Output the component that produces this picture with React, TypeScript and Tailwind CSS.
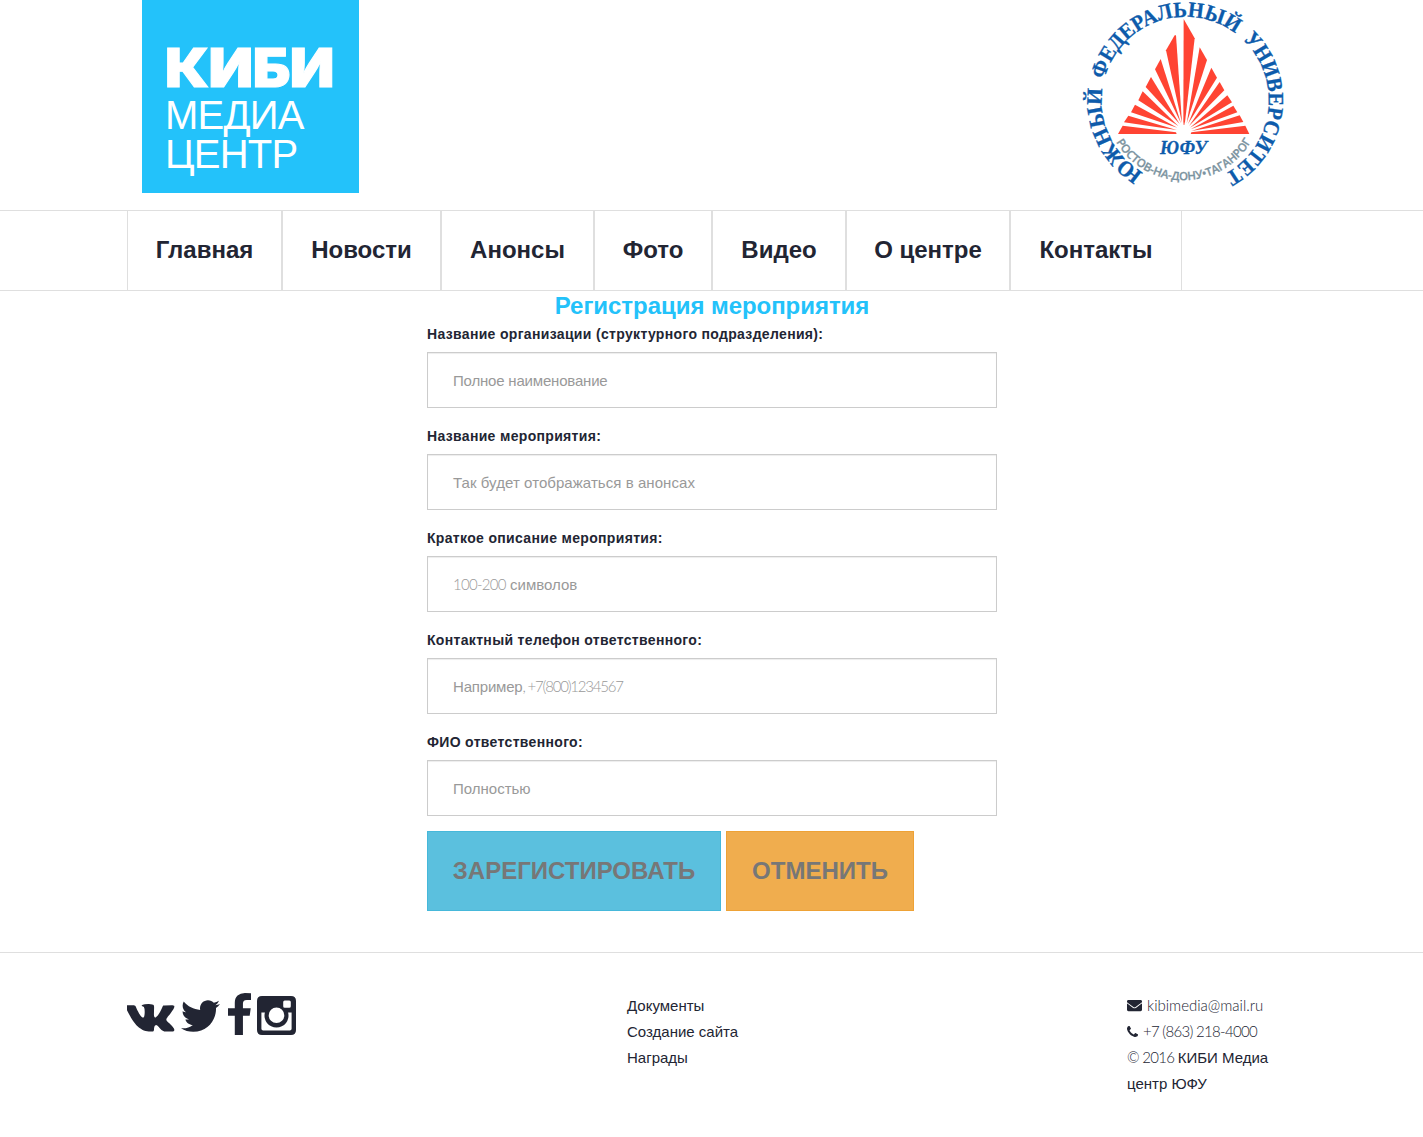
import { FaTwitter, FaEnvelope } from "react-icons/fa";

const nav = [
  { label: "Главная", box: "w-[155px]" },
  { label: "Новости", box: "w-[159px]" },
  { label: "Анонсы", box: "w-[153px]" },
  { label: "Фото", box: "w-[118px]" },
  { label: "Видео", box: "w-[134px]" },
  { label: "О центре", box: "w-[164px]" },
  { label: "Контакты", box: "w-[172px]" },
];

const fields = [
  { label: "Название организации (структурного подразделения):", lead: "", thin: "", text: "Полное наименование", track: "tracking-[-0.19px]", thinTrack: "" },
  { label: "Название мероприятия:", lead: "", thin: "", text: "Так будет отображаться в анонсах", track: "tracking-[0.06px]", thinTrack: "" },
  { label: "Краткое описание мероприятия:", lead: "", thin: "100-200", text: " символов", track: "tracking-normal", thinTrack: "tracking-[-0.7px]" },
  { label: "Контактный телефон ответственного:", lead: "Например", thin: ", +7(800)1234567", text: "", track: "tracking-[-0.19px]", thinTrack: "tracking-[-1.2px]" },
  { label: "ФИО ответственного:", lead: "", thin: "", text: "Полностью", track: "tracking-normal", thinTrack: "" },
];

const rays = [
  "341,57 374,115 344,375 340,375",
  "314,106 318,106 336,368 288,151",
  "272,177 333,370 255,208",
  "243,231 329,372 227,261",
  "218,274 325,378 205,301",
  "195,314 322,383 183,337",
  "175,347 320,390 162,367",
  "158,377 318,397 320,402 144,402",
  "389,142 411,180 350,370",
  "424,203 441,233 354,372",
  "449,246 463,271 357,378",
  "472,286 486,307 360,383",
  "490,317 502,337 362,388",
  "509,346 520,366 364,393",
  "526,377 538,402 362,402 364,397",
];

function Emblem() {
  return (
    <svg className="h-[195px] w-[224px] overflow-visible" viewBox="0 0 224 195">
      <defs>
        <path id="ring" d="M73.3 172.6 A83.5 83.5 0 1 1 153.2 174.7" />
        <path id="bowl" d="M46 142 A78.5 78.5 0 0 0 182 140" />
        <radialGradient id="glow">
          <stop offset="0.1" stopColor="#fff" />
          <stop offset="1" stopColor="#fff" stopOpacity="0" />
        </radialGradient>
      </defs>
      <g transform="scale(0.33333)" fill="#ff4433">
        {rays.map((points) => (
          <polygon key={points} points={points} />
        ))}
      </g>
      <circle cx="114" cy="129" r="7.5" fill="url(#glow)" />
      <g
        className="font-['Liberation_Serif'] text-[22px] font-bold"
        fill="#0d5bab"
        stroke="#0d5bab"
        strokeWidth="0.3"
      >
        <text>
          <textPath href="#ring" textLength="99" lengthAdjust="spacingAndGlyphs">
            ЮЖНЫЙ
          </textPath>
        </text>
        <text>
          <textPath href="#ring" startOffset="108" textLength="164" lengthAdjust="spacingAndGlyphs">
            ФЕДЕРАЛЬНЫЙ
          </textPath>
        </text>
        <text>
          <textPath href="#ring" startOffset="281" textLength="158" lengthAdjust="spacingAndGlyphs">
            УНИВЕРСИТЕТ
          </textPath>
        </text>
      </g>
      <text className="font-['Open_Sans'] text-[11.5px] font-semibold" fill="#7b93a0" stroke="#7b93a0" strokeWidth="0.25">
        <textPath href="#bowl" textLength="163" lengthAdjust="spacing">
          РОСТОВ-НА-ДОНУ•ТАГАНРОГ
        </textPath>
      </text>
      <text
        x="90"
        y="153.5"
        textLength="47"
        className="font-['Liberation_Serif'] text-[18px] font-bold italic"
        fill="#0d5bab"
        stroke="#0d5bab"
        strokeWidth="0.3"
      >
        ЮФУ
      </text>
    </svg>
  );
}

function Vk() {
  return (
    <svg className="h-[45px] w-[49px]" viewBox="0 0 1920 1792" preserveAspectRatio="none" fill="#222533">
      <path d="M1853 520q23 64-150 294-24 32-65 85-78 100-90 131-17 41 14 81 17 21 81 82h1l1 1 1 1 2 2q141 131 191 221 3 5 6.500 12.500t7 26.500-.500 34-25 27.500-59 12.500l-256 4q-24 5-56-5t-52-22l-20-12q-30-21-70-64t-68.500-77.500-61-58-56.500-15.500q-3 1-8 3.500t-17 14.500-21.500 29.500-17 52-6.500 77.500q0 15-3.500 27.500t-7.500 18.500l-4 5q-18 19-53 22h-115q-71 4-146-16.500t-131.500-53-103-66-70.500-57.500l-25-24q-10-10-27.500-30t-71.500-91-106-151-122.500-211-130.500-272q-6-16-6-27t3-16l4-6q15-19 57-19l274-2q12 2 23 6.500t16 8.500l5 3q16 11 24 32 20 50 46 103.500t41 81.500l16 29q29 60 56 104t48.500 68.500 41.500 38.500 34 14 27-5q2-1 5-5t12-22 13.500-47 9.500-81 0-125q-2-40-9-73t-14-46l-6-12q-25-34-85-43-13-2 5-24 17-19 38-30 53-26 239-24 82 1 135 13 20 5 33.500 13.500t20.500 24 10.500 32 3.500 45.500-1 55-2.500 70.500-1.500 82.500q0 11-1 42t-.500 48 3.500 40.500 11.500 39 22.500 24.500q8 2 17 4t26-11 38-34.500 52-67 68-107.500q60-104 107-225 4-10 10-17.500t11-10.500l4-3 5-2.500 13-3 20-.500 288-2q39-5 64 2.500t31 16.500z" />
    </svg>
  );
}

function Facebook() {
  return (
    <svg className="ml-[8px] h-[42px] w-[23px]" viewBox="479 0 864 1664" preserveAspectRatio="none" fill="#222533">
      <path d="M1343 12v264h-157q-86 0-116 36t-30 108v189h293l-39 296h-254v759h-306v-759h-255v-296h255v-218q0-186 104-288.500t277-102.500q147 0 228 12z" />
    </svg>
  );
}

function Phone() {
  return (
    <svg className="mr-[5px] size-[11px]" viewBox="192 128 1408 1408" fill="#222533">
      <path d="M1600 1240q0 27-10 70.500t-21 68.500q-21 50-122 106-94 51-186 51-27 0-53-3.500t-57.500-12.500-47-14.500-55.500-20.500-49-18q-98-35-175-83-127-79-264-216t-216-264q-48-77-83-175-3-9-18-49t-20.500-55.500-14.500-47-12.500-57.500-3.500-53q0-92 51-186 56-101 106-122 25-11 68.500-21t70.500-10q14 0 21 3 18 6 53 76 11 19 30 54t35 63.500 31 53.500q3 4 17.500 25t21.500 35.500 7 28.500q0 20-28.500 50t-62 55-62 53-28.500 46q0 9 5 22.500t8.500 20.500 14 24 11.500 19q76 137 174 235t235 174q2 1 19 11.500t24 14 20.500 8.500 22.500 5q18 0 46-28.500t53-62 55-62 50-28.500q14 0 28.500 7t35.500 21.500 25 17.500q25 15 53.500 31t63.500 35 54 30q70 35 76 53 3 7 3 21z" />
    </svg>
  );
}

function Instagram() {
  return (
    <svg className="mt-[3px] ml-[6px] h-[39px] w-[39px]" viewBox="0 0 39 39">
      <path
        fillRule="evenodd"
        fill="#222533"
        d="M5 0H34Q39 0 39 5V34Q39 39 34 39H5Q0 39 0 34V5Q0 0 5 0ZM27.7 4.5Q26.2 4.5 26.2 6V10.3Q26.2 11.8 27.7 11.8H32.3Q33.8 11.8 33.8 10.3V6Q33.8 4.5 32.3 4.500ZM4.4 16.5V32.7Q4.4 34.5 6.2 34.5H32.8Q34.6 34.5 34.6 32.7V16.5H31.1A12 12 0 1 1 7.9 16.5ZM19.5 11.5A7.8 7.8 0 1 0 19.5 27.1A7.8 7.8 0 1 0 19.5 11.5Z"
      />
    </svg>
  );
}

export default function App() {
  return (
    <div className="h-[1137px] w-[1423px] overflow-hidden bg-white font-['Liberation_Sans',sans-serif] text-[#222533]">
      <header className="flex h-[210px] items-start justify-between pr-[129px] pl-[142px]">
        <div className="h-[193px] w-[217px] bg-[#23c2fa] pt-[48px] pl-[23px] text-white">
          <div className="h-[48px] w-[160px] origin-left scale-x-[1.085] font-['Inter'] text-[53.5px] leading-[40px] font-black tracking-[-0.5px] [-webkit-text-stroke:1px_white]">
            КИБИ
          </div>
          <div className="h-[39px] text-[40px] leading-[39px] tracking-[-0.8px]">МЕДИА</div>
          <div className="h-[39px] text-[40px] leading-[39px] tracking-[-0.8px]">ЦЕНТР</div>
        </div>
        <Emblem />
      </header>

      <nav className="flex h-[81px] border-y border-[#dfdfdf] pl-[127px] text-2xl font-bold">
        {nav.map((item) => (
          <a key={item.label} className={`flex items-center justify-center border-x border-[#dfdfdf] pb-[2px] ${item.box}`}>
            {item.label}
          </a>
        ))}
      </nav>

      <main className="ml-[427px] h-[661px] w-[570px]">
        <h1 className="h-[29px] text-center text-2xl leading-[30px] font-bold tracking-[-0.05px] text-[#23c2fa]">
          Регистрация мероприятия
        </h1>
        <form>
          {fields.map((f) => (
            <div key={f.label} className="h-[102px]">
              <label className="block h-[32px] pt-[4px] text-sm leading-[20px] font-bold tracking-[0.33px]">{f.label}</label>
              <div className={`flex h-[56px] items-center border border-[#ccc] pt-[2px] pl-[25px] text-[15px] whitespace-pre text-[#999] shadow-[inset_0_1px_1px_rgba(0,0,0,0.075)] ${f.track}`}>
                {f.lead}
                <span className={`pb-[2px] font-['Lato'] font-light ${f.thinTrack}`}>{f.thin}</span>
                {f.text}
              </div>
            </div>
          ))}
          <div className="flex gap-[5px] pt-[1px] text-2xl font-bold text-[#777]">
            <button type="button" className="h-[80px] w-[294px] border border-[#46b8da] bg-[#5bc0de]">
              ЗАРЕГИСТИРОВАТЬ
            </button>
            <button type="button" className="h-[80px] w-[188px] border border-[#eea236] bg-[#f0ad4e]">
              ОТМЕНИТЬ
            </button>
          </div>
        </form>
      </main>

      <footer className="flex h-[185px] border-t border-[#dfdfdf] pt-[40px] pl-[127px] text-[15px] leading-[26px]">
        <div className="flex w-[500px] items-start">
          <Vk />
          <FaTwitter className="mt-[3px] ml-[5px] h-[40px] w-[39px]" />
          <Facebook />
          <Instagram />
        </div>
        <div className="w-[500px]">
          <div>Документы</div>
          <div>Создание сайта</div>
          <div>Награды</div>
        </div>
        <div className="w-[170px]">
          <div className="flex h-[26px] items-center pb-[2px] font-['Lato'] font-light">
            <FaEnvelope className="mr-[5px] size-[15px]" />
            kibimedia@mail.ru
          </div>
          <div className="flex h-[26px] items-center pb-[2px] font-['Lato'] font-light tracking-[-0.7px]">
            <Phone />
            +7 (863) 218-4000
          </div>
          <div className="flex h-[26px] whitespace-pre">
            <span className="-mt-px font-['Lato'] font-light tracking-[-0.7px]">© 2016 </span>
            <span>КИБИ Медиа</span>
          </div>
          <div>центр ЮФУ</div>
        </div>
      </footer>
    </div>
  );
}
